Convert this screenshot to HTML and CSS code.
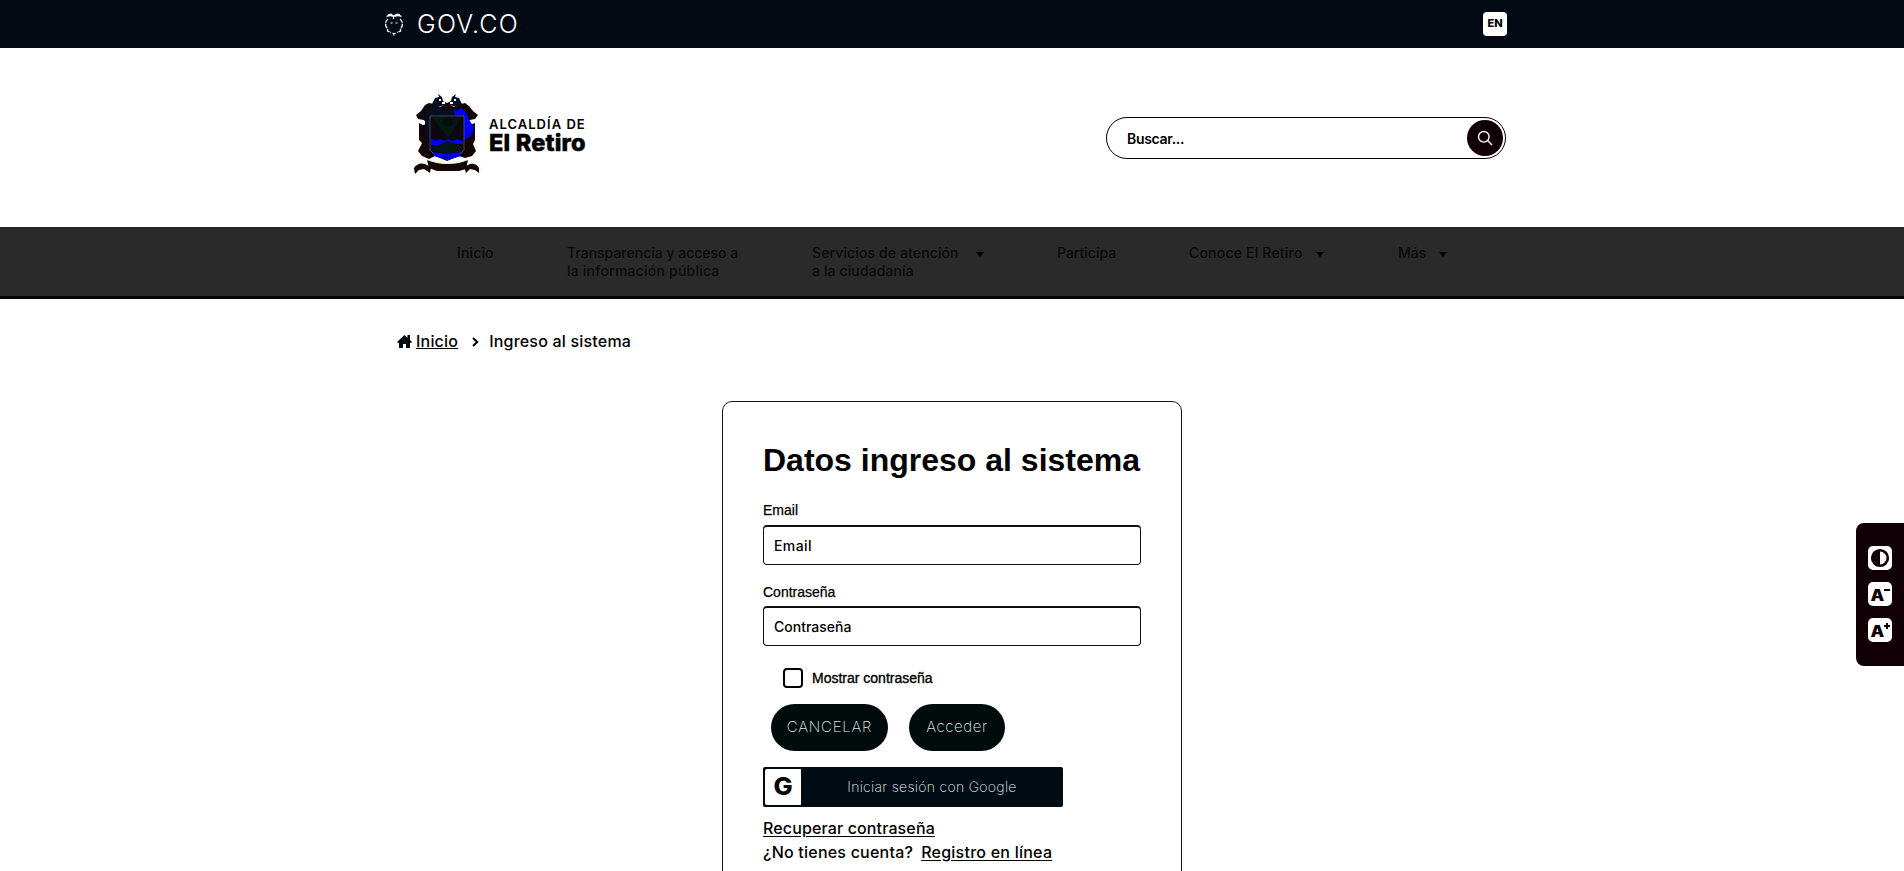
FILE: index.html
```html
<!DOCTYPE html>
<html lang="es">
<head>
<meta charset="utf-8">
<title>Ingreso al sistema</title>
<link rel="stylesheet" href="styles.css">
</head>
<body>
<header>
  <div class="topbar">
    <div class="gov">
      <svg width="20" height="24" viewBox="0 0 20 24" fill="none" stroke="#fff" stroke-width="1.3"><path d="M2.5 4.5Q6 2.5 9.5 4.5V7M17.5 4.5Q14 2.5 10.5 4.5M4 3L7 2.2L9.5 4.2L13 2.2L16 3" /><path d="M4 7Q1.5 9 1.6 12Q1.6 15 3.5 16.5V19L7 20.5M16 7Q18.5 9 18.4 12Q18.4 15 16.5 16.5V19L13 20.5" stroke-dasharray="4.5 .9"/><path d="M6.5 11h2M11.5 11h2" stroke-width="1"/><path d="M8.5 21L10 22L11.5 21M10 21v2.5"/></svg>
      <span class="gov-name">GOV.CO</span>
    </div>
    <a class="lang">EN</a>
  </div>
  <div class="brand">
    <div class="logo">
      <svg class="crest" width="68" height="82" viewBox="0 0 68 82">
        <path fill="#120607" d="M3 22L8 18L12 12L16 10L21 11L27 14L34 10L41 14L48 11L52 10L56 13L60 18L65 22L62 26L57 27L54 30L57 32L62 30V47L60 51L63 58L59 63L52 65L46 63L34 68L22 63L16 66L9 63L5 58L9 50L6 47V30L10 32L14 31L11 27L5 26Z"/>
        <path fill="#060f22" d="M19 11L22 5L26 4L25 1L29 4L30 8L34 10L38 8L39 4L43 1L42 4L46 5L49 11L43 14L34 11L25 14ZM13 15L24 14L34 17L44 15L40 23H17V44H12V31Z"/>
        <path fill="#fff" d="M26 6h2v2h-2zM32 4h4v1h-4zM29 9h3v2h-3zM33 6h2v3h-2zM37 9h3v2h-3zM41 6h2v2h-2z"/>
        <path fill="#0000f4" d="M41 18L49 15L54 21L56 27L61 34L59 42L51 47V24L42 23ZM17 45H51V54H17ZM20 60L34 65L48 60V63L35 67L21 63Z"/>
        <path fill="#0c0710" stroke="#8d8692" stroke-width=".5" d="M17 23H51V57L47 61L34 63L21 61L17 57Z"/>
        <path fill="#041711" d="M19 24H49L35 45ZM18 54L28 50L34 47L42 51L50 53V58L34 60L18 58Z"/>
        <path fill="#0000f4" d="M18 45L23 48L27 46L31 48L35 46L40 48L44 46L50 48V51L42 51L34 48L26 52H18ZM20 59L34 61L48 59L46 62L34 64L22 62Z"/>
        <circle cx="35" cy="29" r="5" fill="#03100b"/>
        <path fill="#120607" d="M14 67Q24 71 34 71Q46 71 55 67L53 76L46 78H24L16 75ZM1 75Q5 69 12 71L18 74L17 80L11 76L6 77L2 81ZM51 74L57 71Q63 70 66 75V80L62 77L57 76L53 80Z"/>
        <path fill="none" stroke="#e4ec9a" stroke-width=".8" d="M14 66.5Q24 70.5 34 70.5Q46 70.5 55 66.5M.5 75V80M67 74V80"/>
      </svg>
      <div class="logo-text"><span class="logo-top">ALCALDÍA DE</span><span class="logo-name">El Retiro</span></div>
    </div>
    <div class="search"><span class="w-buscar">Buscar...</span>
      <button class="search-btn"><svg width="16" height="16" viewBox="0 0 16 16" fill="none" stroke="#fff" stroke-width="1.4"><circle cx="6.8" cy="6.8" r="5.3"/><path d="M10.6 10.6L15 15"/></svg></button>
    </div>
  </div>
  <nav class="nav">
    <div class="nav-in">
      <a class="n1"><span>Inicio</span></a>
      <a class="n2"><span>Transparencia y acceso a<br><span class="wide">la información pública</span></span></a>
      <a class="n3"><span>Servicios de atención<br>a la ciudadanía</span><i></i></a>
      <a class="n4"><span>Participa</span></a>
      <a class="n5"><span>Conoce El Retiro</span><i></i></a>
      <a class="n6"><span>Más</span><i></i></a>
    </div>
  </nav>
</header>
<main>
  <div class="crumbs">
    <svg width="15" height="13" viewBox="0 0 15 13"><path fill="#000810" d="M7.5 0L0 7L1 8L2 7.4V13H6V9H9V13H13V7.4L14 8L15 7L13 5V0H10.5V2.7Z"/></svg>
    <a class="crumb-home">Inicio</a>
    <svg class="chev" width="7" height="10" viewBox="0 0 7 10" fill="none" stroke="#000" stroke-width="2"><path d="M1 1L5.2 5L1 9"/></svg>
    <span class="crumb-now">Ingreso al sistema</span>
  </div>
  <form class="card">
    <h1>Datos ingreso al sistema</h1>
    <label class="lab">Email</label>
    <div class="input"><span class="w-email">Email</span></div>
    <label class="lab lab2">Contraseña</label>
    <div class="input in2"><span>Contraseña</span></div>
    <div class="check"><span class="box"></span><span>Mostrar contraseña</span></div>
    <div class="btns"><a class="btn b1"><span>CANCELAR</span></a><a class="btn b2"><span>Acceder</span></a></div>
    <a class="google"><span class="g"><b>G</b></span><span class="gt">Iniciar sesión con Google</span></a>
    <div class="links"><a class="rec">Recuperar contraseña</a></div>
    <div class="links"><span class="no">¿No tienes cuenta?</span><a class="reg">Registro en línea</a></div>
  </form>
</main>
<aside class="tools">
  <a><svg width="24" height="24" viewBox="0 0 24 24"><circle cx="12" cy="12" r="7.8" fill="#fff" stroke="#100006" stroke-width="2.6"/><path fill="#100006" d="M12 4a8 8 0 0 0 0 16z"/></svg></a>
  <a><span class="a">A</span><svg width="8" height="8" viewBox="0 0 8 8"><path d="M1 4H7" stroke="#100006" stroke-width="2"/></svg></a>
  <a><span class="a">A</span><svg width="8" height="8" viewBox="0 0 8 8"><path d="M1 4H7M4 1V7" stroke="#100006" stroke-width="2"/></svg></a>
</aside>
</body>
</html>
```
FILE: styles.css
```css
*{box-sizing:border-box}
body{margin:0;height:871px;overflow:hidden;background:#fff;color:#000;font-family:Inter,"Liberation Sans",sans-serif;font-size:16px;position:relative}
span,a{white-space:nowrap}
header{height:299px}
main{height:572px;overflow:hidden}
.topbar{height:48px;background:#030a14;display:flex;justify-content:space-between;align-items:center;padding:0 397px 0 384px}
.gov{display:flex;align-items:center;gap:13px}
.gov-name{color:#fff;font-weight:300;font-size:25px;line-height:48px;letter-spacing:1.3px}
.lang{width:24px;height:24px;border-radius:4px;background:#fff;font-weight:800;font-size:11px;line-height:23px;text-align:center}
.brand{height:179px;display:flex;justify-content:space-between;padding:45px 398px 0 413px}
.logo{display:flex;gap:7px}
.logo-text{display:flex;flex-direction:column;padding-top:23px}
.logo-top{font-size:13px;font-weight:600;line-height:16px;letter-spacing:1.02px;margin-left:1px}
.logo-name{font-size:23.5px;font-weight:800;line-height:22px;letter-spacing:.2px;margin-left:1px;-webkit-text-stroke:.5px #000}
.search{width:400px;height:42px;margin-top:24px;border:1.5px solid #000;border-radius:21px;display:flex;align-items:center;justify-content:space-between;padding:0 2px 0 20px;font-size:14px;font-weight:600}
.w-buscar{letter-spacing:-.3px}
.search-btn{width:36px;height:36px;border:0;padding:0;border-radius:50%;background:#100006;display:flex;align-items:center;justify-content:center}
.nav{height:72px;background:#2a2a2a;border-bottom:3px solid #000508;color:#0b0b0b}
.nav-in{display:grid;grid-template-columns:110px 245px 245px 132px 209px 1fr;padding:17px 0 0 457px;font-size:14px;line-height:18px;font-weight:500}
.nav-in a{display:flex}
.nav-in i{border:4.5px solid transparent;border-top:5px solid #000;border-bottom:0;height:5px;margin:8px 0 0 17px}
.n1{letter-spacing:.15px}
.wide{letter-spacing:.22px}
.n3{letter-spacing:.12px}
.n5{letter-spacing:.2px}
.nav-in .n5 i{margin-left:13px}
.nav-in .n6 i{margin-left:13px}
.crumbs{display:flex;align-items:center;height:20px;padding-left:397px;font-weight:500;font-size:16px;letter-spacing:.2px;margin-top:32px}
.crumb-home{text-decoration:underline;margin-left:4px}
.chev{margin:1px 10px 0 14px}
.card{width:460px;height:520px;margin:50px 0 0 722px;border:1px solid #14141e;border-radius:10px;padding:39px 40px 0}
h1{font:bold 32px/38px "Liberation Sans",sans-serif;margin:0;white-space:nowrap}
.lab{display:block;font:14px/16px "Liberation Sans",sans-serif;margin-top:23px;height:16px;-webkit-text-stroke:.25px #000}
.lab2{margin-top:19px}
.input{height:40px;margin-top:7px;border:1px solid #111;border-top-width:2px;border-radius:4px;padding:0 10px;font-size:14px;line-height:37px;font-weight:500}
.in2{margin-top:6px}
.w-email{letter-spacing:.4px}
.check{display:flex;align-items:center;gap:9px;margin:22px 0 0 20px;font:14px/20px "Liberation Sans",sans-serif;height:20px;-webkit-text-stroke:.35px #000}
.box{width:20px;height:20px;border:2px solid #000;border-radius:4px}
.btns{display:flex;gap:21px;margin:16px 0 0 8px}
.btn{height:47px;border-radius:24px;background:#000b0b;color:#dde8ea;font-weight:200;font-size:15px;line-height:46px;display:flex;justify-content:center}
.b1{width:117px;letter-spacing:.75px}
.b2{width:96px;letter-spacing:.6px}
.google{width:300px;height:40px;margin-top:16px;background:#000b14;border-radius:2px;padding:2px;display:flex;color:#e8f0f4}
.g{width:36px;height:36px;background:#fff;color:#0a0204;font-size:24px;line-height:36px;text-align:center;border-radius:2px 0 0 2px}
.g b{font-weight:800;display:inline-block;transform:scaleX(1.06)}
.gt{flex:1;text-align:center;line-height:36px;font-weight:200;font-size:14px;letter-spacing:.3px;padding-left:2px}
.links{display:flex;gap:8px;height:24px;line-height:25px;font-size:16px;font-weight:500}
.google+.links{margin-top:9px}
.links a{text-decoration:underline;text-underline-offset:2px}
.rec{letter-spacing:.13px}
.no{letter-spacing:.22px}
.reg{letter-spacing:.24px}
.tools{position:absolute;right:0;top:523px;width:48px;height:143px;background:#100006;border-radius:8px 0 0 8px;padding:23px 12px;display:flex;flex-direction:column;gap:12px}
.tools a{width:24px;height:24px;background:#fff;border-radius:5px;display:flex;color:#100006}
.a{font-weight:900;font-size:16px;line-height:27px;margin-left:3px;transform:scaleX(1.08)}
.a+svg{margin:4px 0 0 -1px}
```
